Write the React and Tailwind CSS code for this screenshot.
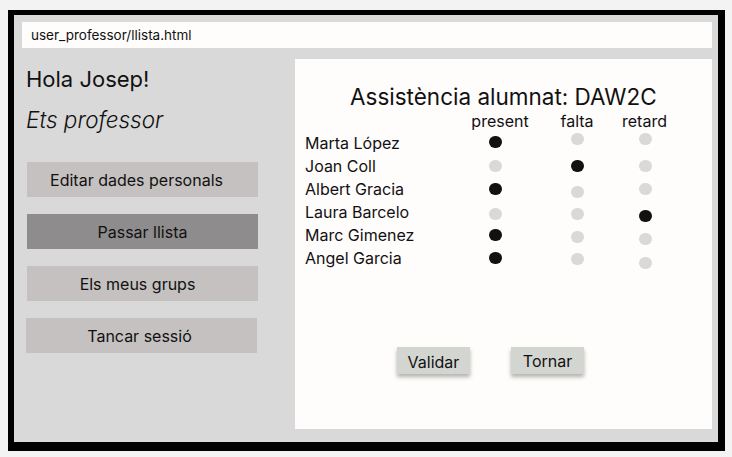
import React from 'react';

const students = [
  { name: 'Marta López', mark: 0, dy: ['-translate-y-[1px]', '-translate-y-[4px]', '-translate-y-[4px]'] },
  { name: 'Joan Coll', mark: 1, dy: ['', '', ''] },
  { name: 'Albert Gracia', mark: 0, dy: ['', 'translate-y-[3px]', ''] },
  { name: 'Laura Barcelo', mark: 2, dy: ['translate-y-[2px]', 'translate-y-[2px]', 'translate-y-[4px]'] },
  { name: 'Marc Gimenez', mark: 0, dy: ['', 'translate-y-[2px]', 'translate-y-[4px]'] },
  { name: 'Angel Garcia', mark: 0, dy: ['', 'translate-y-[1px]', 'translate-y-[5px]'] },
];

const menu = [
  { label: 'Editar dades personals', active: false, shift: '-translate-x-[6px]', box: '' },
  { label: 'Passar llista', active: true, shift: '', box: '' },
  { label: 'Els meus grups', active: false, shift: '-translate-x-[5px]', box: '' },
  { label: 'Tancar sessió', active: false, shift: '-translate-x-[2px]', box: '-translate-x-[1px]' },
];

const Dot = ({ on, shift }) => (
  <div className="flex justify-center">
    <span
      className={`block w-[13px] h-[12px] rounded-full ${on ? 'bg-[#111]' : 'bg-[#d9d9d9]'} ${shift}`}
    />
  </div>
);

const App = () => {
  return (
    <div
      className="w-[732px] h-[457px] bg-[#f3f3f3] pl-[8px] pt-[10px] text-[#111]"
      style={{ fontFamily: 'Inter, "Liberation Sans", sans-serif' }}
    >
      <div className="w-[717px] h-[441px] border-black border-l-[6px] border-t-[5px] border-r-[7px] border-b-[9px] bg-[#d9d9d9]">
        {/* url bar */}
        <div className="ml-[8px] mt-[7px] w-[690px] h-[26px] bg-[#fffcfc] flex items-center pl-[9px] text-[13.5px]">
          user_professor/llista.html
        </div>

        <div className="flex">
          {/* left menu */}
          <div className="w-[281px] pl-[12px]">
            <div className="mt-[17px] text-[22px] leading-[28px]">Hola Josep!</div>
            <div className="mt-[13px] text-[22.5px] leading-[28px] italic font-light">Ets professor</div>
            <div className="mt-[28px] flex flex-col gap-[17px] pl-[1px]">
              {menu.map((m) => (
                <div
                  key={m.label}
                  className={`w-[231px] h-[35px] flex items-center justify-center text-[16px] ${m.box} ${
                    m.active ? 'bg-[#8e8c8c]' : 'bg-[#c4c1c0]'
                  }`}
                >
                  <span className={m.shift}>{m.label}</span>
                </div>
              ))}
            </div>
          </div>

          {/* attendance panel */}
          <div className="mt-[11px] w-[417px] h-[370px] bg-[#fffcfc]">
            <div className="pt-[24px] text-[22.5px] leading-[28px] pl-[55px]">Assistència alumnat: DAW2C</div>

            <div className="pl-[10px] grid grid-cols-[155px_70px_94px_42px] text-[16px]">
              <div className="h-[20px]" />
              <div className="h-[20px] leading-[20px] text-center translate-x-[5px]">present</div>
              <div className="h-[20px] leading-[20px] text-center">falta</div>
              <div className="h-[20px] leading-[20px] text-center -translate-x-[2px]">retard</div>

              {students.map((s) => (
                <React.Fragment key={s.name}>
                  <div className="h-[23px] leading-[23px] translate-y-[1px] whitespace-nowrap">{s.name}</div>
                  {[0, 1, 2].map((c) => (
                    <div key={c} className="h-[23px] flex items-center justify-center">
                      <Dot on={s.mark === c} shift={s.dy[c]} />
                    </div>
                  ))}
                </React.Fragment>
              ))}
            </div>

            <div className="mt-[78px] ml-[102px] flex gap-[41px]">
              <button className="w-[73px] h-[27px] bg-[#d3d5d1] text-[16px] shadow-[0_3px_4px_rgba(0,0,0,0.3)] pt-[2px]">
                Validar
              </button>
              <button className="w-[73px] h-[27px] bg-[#d3d5d1] text-[16px] shadow-[0_3px_4px_rgba(0,0,0,0.3)]">
                Tornar
              </button>
            </div>
          </div>
        </div>
      </div>
    </div>
  );
};

export default App;
